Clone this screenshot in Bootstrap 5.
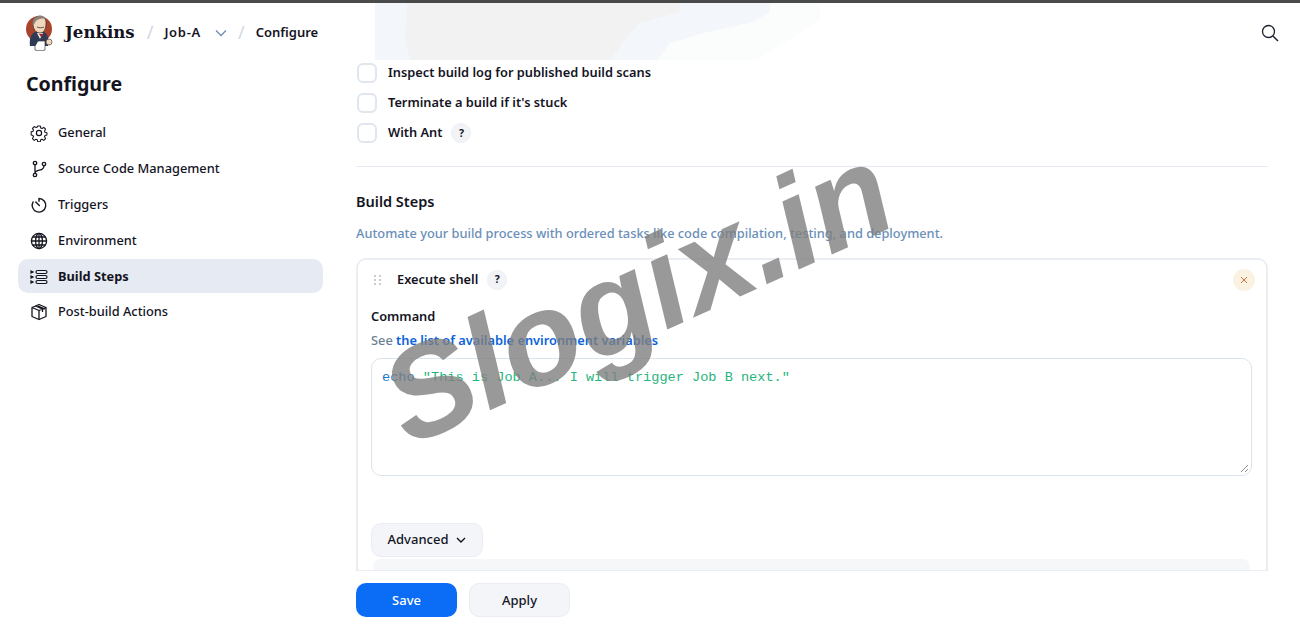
<!DOCTYPE html>
<html lang="en">
<head>
    <meta charset="UTF-8">
    <meta name="viewport" content="width=device-width, initial-scale=1.0">
    <title>Job-A Config - Jenkins</title>
    <link href="https://cdn.jsdelivr.net/npm/bootstrap@5.3.0/dist/css/bootstrap.min.css" rel="stylesheet">
    <style>
        html, body { height: 100%; overflow: hidden; }
        body { font-family: "Noto Sans", sans-serif; color: #14141f; font-size: 12.8px; font-weight: 500; background: #fff; position: relative; }
        .top-strip { height: 3px; background: #4a4a4a; }
        .head-blur { position: absolute; left: 340px; top: 3px; z-index: -1; }
        .page-head { height: 57px; padding: 2px 21px 0 25px; }
        .brand-name { font-family: "DejaVu Serif", serif; font-weight: 700; font-size: 16.6px; margin-left: 9px; color: #14141f; }
        .crumb-sep { color: #cfd8e3; font-size: 18px; font-weight: 400; margin: 0 11px 0 12px; }
        .crumb { font-size: 13px; font-weight: 600; }
        .crumb-job { letter-spacing: .7px; }
        .crumb-chev { margin: 0 11px 0 14px; }
        .page-body { height: 570px; }
        .side-col { width: 356px; flex: none; padding: 0 33px 0 18px; }
        .side-title { font-size: 19.6px; font-weight: 700; margin: 11px 0 19px 8px; line-height: 26px; }
        .side-link { height: 34px; margin-bottom: 2px; padding: 0 10px 0 12px; border-radius: 10px; color: #14141f; text-decoration: none; gap: 10px; }
        .side-link.on { background: #e6eaf2; font-weight: 700; margin-top: -1px; padding-top: 2px; }
        .main-col { width: 912px; flex: none; }
        .scroll-area { height: 510px; overflow: hidden; }
        .check-list { margin-top: -2px; }
        .check-row { height: 30px; gap: 11px; padding-left: 1px; font-weight: 600; }
        .check-box { width: 20px; height: 20px; border: 2px solid #dfe6ee; border-radius: 6px; background: #fff; }
        .help-dot { width: 20px; height: 20px; border-radius: 50%; background: #f1f3f7; border: 1px solid #eceff4; font-size: 10.5px; font-weight: 700; line-height: 1; }
        .help-near { margin-left: -2px; }
        .sep-line { border-top: 1px solid #e6eaf2; margin: 18px 0 22px; }
        .sect-title { font-size: 14.5px; font-weight: 600; line-height: 24px; margin-bottom: 8px; }
        .sect-desc { color: #6a8fb8; line-height: 24px; margin-bottom: 13px; font-weight: 500; }
        .step-box { border: 2px solid #eaeef3; border-bottom: 0; border-radius: 10px 10px 0 0; height: 320px; padding: 0 14px 0 13px; overflow: hidden; }
        .step-head { height: 38px; padding-top: 1px; }
        .drag-dots { margin: 0 14px 0 2px; }
        .step-name { font-weight: 600; margin-right: 9px; }
        .close-dot { width: 22px; height: 22px; border-radius: 50%; background: #fbf3e2; margin-right: -3px; }
        .field-label { font-weight: 600; line-height: 20px; margin-top: 8px; }
        .field-hint { color: #6c7f95; line-height: 20px; margin-top: 4px; font-weight: 500; }
        .field-hint a { color: #0b62dc; font-weight: 600; text-decoration: none; }
        .code-box { height: 118px; margin-top: 8px; border: 1px solid #dbe3ec; border-radius: 10px; padding: 10px 10px; font-family: "Liberation Mono", monospace; font-size: 13.6px; line-height: 18px; font-weight: 400; position: relative; }
        .code-cmd { color: #1b78c8; }
        .code-str { color: #1fb57c; }
        .grip { position: absolute; right: 2px; bottom: 2px; }
        .adv-btn { margin-top: 47px; height: 34px; width: 112px; background: #f3f5f9; border: 1px solid #e9edf3; border-radius: 10px; font-size: 13px; font-weight: 500; color: #14141f; gap: 8px; padding: 0; }
        .adv-panel { height: 12px; margin: 2px 2px 0; background: #f6f7f9; border-radius: 8px 8px 0 0; }
        .foot-bar { height: 60px; border-top: 1px solid #e9edf3; padding-top: 12px; gap: 12px; }
        .foot-btn { width: 101px; height: 34px; padding: 1px 0 0; border-radius: 10px; font-size: 13px; font-weight: 500; }
        .save-btn { background: #0b6cf5; border: 0; color: #fff; }
        .apply-btn { background: #f3f5f9; border: 1px solid #e9edf3; color: #14141f; }
        .stamp { position: absolute; left: 366px; top: 229px; font-family: "Liberation Sans", sans-serif; font-weight: 700; font-style: italic; font-size: 130px; line-height: 1; color: rgba(128,128,128,.8); transform: rotate(-24.5deg); transform-origin: center; pointer-events: none; white-space: nowrap; }
    </style>
</head>
<body>
    <div class="top-strip"></div>

    <!-- faint smear behind the header -->
    <svg class="head-blur" width="480" height="57" viewBox="340 3 480 57">
        <path d="M657 60H757L820 20V3H700z" fill="#fbfcfc"/>
        <path d="M375 3H770V12L753 22 707 32 670 43 657 60H375z" fill="#f3f6fa"/>
        <path d="M407 3H680V12L640 23 630 33 610 60H410L405 40z" fill="#f2f2f2"/>
    </svg>

    <!-- Header -->
    <header class="page-head d-flex align-items-center">
        <svg width="31" height="36" viewBox="0 0 31 36">
            <circle cx="14" cy="14" r="13" fill="#a8432c"/>
            <path d="M5 31c-1-7 1-12 5-14h9c4 2 5 7 4 14z" fill="#2f3a55"/>
            <path d="M12 18l3 6 3-6z" fill="#f4f1ea"/>
            <path d="M14 19l2 3 3-3z" fill="#a8221f"/>
            <path d="M8 9c0-5 3-8 7-8s6 3 6 7c0 6-2 10-6 10s-7-4-7-9z" fill="#f0d6bd" stroke="#3a2a25" stroke-width=".7"/>
            <path d="M8 11C6 6 10 1 15 1c3 0 5 1 6 3-4-1-8 0-10 2-1 2-2 3-3 5z" fill="#8d8378"/>
            <path d="M12 12c2 1 5 1 7 0" fill="none" stroke="#3a2a25" stroke-width=".8"/>
            <path d="M10 31v4c3 1 7 1 10 0v-9h-7z" fill="#fff" stroke="#3a3a3a" stroke-width=".7"/>
            <circle cx="24" cy="27" r="3" fill="#f0d6bd" stroke="#3a2a25" stroke-width=".6"/>
        </svg>
        <span class="brand-name">Jenkins</span>
        <span class="crumb-sep">/</span>
        <span class="crumb crumb-job">Job-A</span>
        <svg class="crumb-chev" width="12" height="8" viewBox="0 0 12 8"><path d="M1 1.500l5 5 5-5" fill="none" stroke="#6f8db5" stroke-width="1.300"/></svg>
        <span class="crumb-sep ms-0">/</span>
        <span class="crumb">Configure</span>
        <svg class="ms-auto" width="18" height="18" viewBox="0 0 18 18"><circle cx="7.500" cy="7.500" r="6" fill="none" stroke="#1c2230" stroke-width="1.300"/><path d="M12 12l5 5" stroke="#1c2230" stroke-width="1.500"/></svg>
    </header>

    <div class="page-body d-flex">
        <!-- Sidebar -->
        <aside class="side-col">
            <div class="side-title">Configure</div>
            <a class="side-link d-flex align-items-center" href="#">
                <svg width="18" height="18" viewBox="0 0 18 18" fill="none" stroke="#14141f" stroke-width="1.200"><circle cx="9" cy="9" r="2.600"/><path d="M7.600 1.200h2.800l.5 2.200 1.400.6 2-1.200 2 2-1.200 2 .6 1.400 2.100.5v2.600l-2.100.5-.6 1.400 1.200 2-2 2-2-1.200-1.400.6-.5 2.100H7.600l-.5-2.100-1.400-.6-2 1.200-2-2 1.200-2-.6-1.400-2-.5V7.700l2-.5.6-1.400-1.200-2 2-2 2 1.200 1.400-.6z" transform="translate(.9 .9) scale(.9)" stroke-linejoin="round"/></svg>
                General
            </a>
            <a class="side-link d-flex align-items-center" href="#">
                <svg width="18" height="18" viewBox="0 0 18 18" fill="none" stroke="#14141f" stroke-width="1.300"><circle cx="5" cy="3" r="1.700"/><circle cx="5" cy="15" r="1.700"/><circle cx="14" cy="4" r="1.700"/><path d="M5 4.700v8.600M14 5.700c0 3-2 4-4.500 4.500-2.500.5-4.500 1-4.500 3"/></svg>
                Source Code Management
            </a>
            <a class="side-link d-flex align-items-center" href="#">
                <svg width="18" height="18" viewBox="0 0 18 18" fill="none" stroke="#14141f" stroke-width="1.400" stroke-linecap="round"><path d="M9 2.500a6.800 6.800 0 1 1-5.900 3.400M9 2.500v2.800"/><path d="M5.800 6l3.500 3.500"/></svg>
                Triggers
            </a>
            <a class="side-link d-flex align-items-center" href="#">
                <svg width="18" height="18" viewBox="0 0 18 18" fill="none" stroke="#14141f" stroke-width="1.300"><circle cx="9" cy="9" r="7.600"/><ellipse cx="9" cy="9" rx="3.400" ry="7.600"/><path d="M9 1.400v15.200M1.400 9h15.200M2.500 5h13M2.500 13h13"/></svg>
                Environment
            </a>
            <a class="side-link on d-flex align-items-center" href="#">
                <svg width="18" height="18" viewBox="0 0 18 18" fill="none" stroke="#14141f" stroke-width="1.200"><rect x="6" y="2.500" width="11" height="3" rx="1.500"/><rect x="6" y="7.500" width="11" height="3" rx="1.500"/><rect x="6" y="12.500" width="11" height="3" rx="1.500"/><path d="M1 3l2 1-2 1zM1 8l2 1-2 1zM1 13l2 1-2 1z" fill="#14141f"/></svg>
                Build Steps
            </a>
            <a class="side-link d-flex align-items-center" href="#">
                <svg width="18" height="18" viewBox="0 0 18 18" fill="none" stroke="#14141f" stroke-width="1.300" stroke-linejoin="round"><path d="M9 1.500l7 3v9l-7 3-7-3v-9z"/><path d="M2 4.500l7 3 7-3M9 7.500v9M5.500 3l7 3v3M8 3l7 3"/></svg>
                Post-build Actions
            </a>
        </aside>

        <!-- Main form -->
        <main class="main-col">
            <div class="scroll-area">
                <div class="check-list">
                    <div class="check-row d-flex align-items-center"><span class="check-box"></span>Inspect build log for published build scans</div>
                    <div class="check-row d-flex align-items-center"><span class="check-box"></span>Terminate a build if it's stuck</div>
                    <div class="check-row d-flex align-items-center"><span class="check-box"></span>With Ant <span class="help-dot help-near d-inline-flex align-items-center justify-content-center">?</span></div>
                </div>
                <div class="sep-line"></div>
                <div class="sect-title">Build Steps</div>
                <div class="sect-desc">Automate your build process with ordered tasks like code compilation, testing, and deployment.</div>
                <div class="step-box">
                    <div class="step-head d-flex align-items-center">
                        <svg class="drag-dots" width="10" height="12" viewBox="0 0 10 12" fill="#b5bcc6"><circle cx="2" cy="2" r="1"/><circle cx="7" cy="2" r="1"/><circle cx="2" cy="6" r="1"/><circle cx="7" cy="6" r="1"/><circle cx="2" cy="10" r="1"/><circle cx="7" cy="10" r="1"/></svg>
                        <span class="step-name">Execute shell</span>
                        <span class="help-dot d-inline-flex align-items-center justify-content-center">?</span>
                        <span class="close-dot d-inline-flex align-items-center justify-content-center ms-auto">
                            <svg width="8" height="8" viewBox="0 0 8 8"><path d="M1 1l6 6M7 1L1 7" stroke="#cf6f3a" stroke-width="1"/></svg>
                        </span>
                    </div>
                    <div class="field-label">Command</div>
                    <div class="field-hint">See <a href="#">the list of available environment variables</a></div>
                    <div class="code-box">
                        <span class="code-cmd">echo</span> <span class="code-str">"This is Job A... I will trigger Job B next."</span>
                        <svg class="grip" width="10" height="10" viewBox="0 0 10 10"><path d="M9 2L2 9M9 6L6 9" stroke="#8a8f96" stroke-width="1"/></svg>
                    </div>
                    <button class="btn adv-btn d-flex align-items-center justify-content-center" type="button">
                        Advanced
                        <svg width="10" height="7" viewBox="0 0 10 7"><path d="M1 1l4 4 4-4" fill="none" stroke="#14141f" stroke-width="1.400"/></svg>
                    </button>
                    <div class="adv-panel"></div>
                </div>
            </div>
            <div class="foot-bar d-flex">
                <button class="btn foot-btn save-btn" type="button">Save</button>
                <button class="btn foot-btn apply-btn" type="button">Apply</button>
            </div>
        </main>
    </div>

    <!-- Watermark over the page -->
    <div class="stamp">Slogix.in</div>
</body>
</html>
